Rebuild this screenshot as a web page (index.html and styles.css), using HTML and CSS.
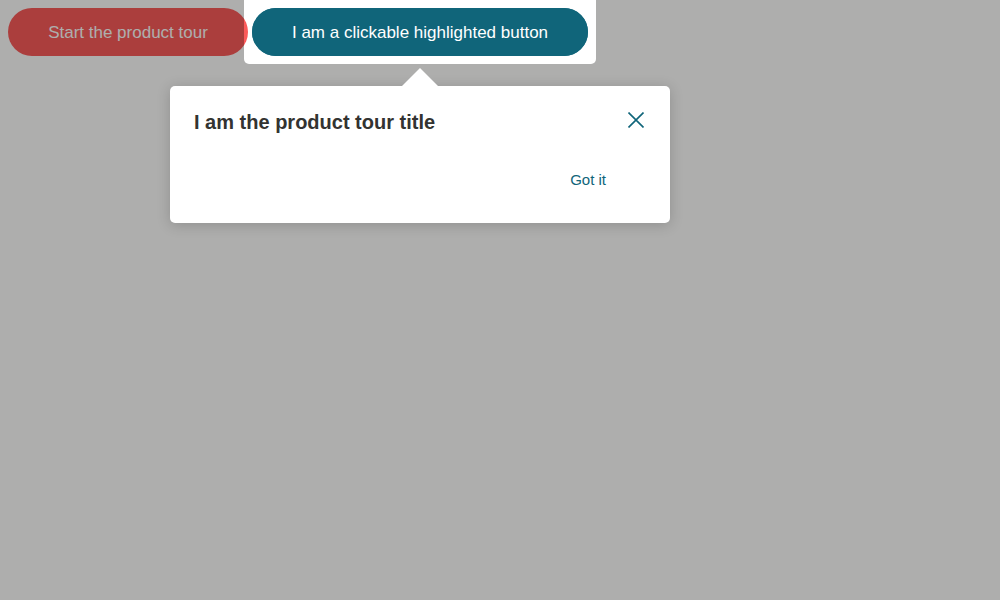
FILE: index.html
```html
<!DOCTYPE html>
<html>
<head>
<meta charset="utf-8">
<link rel="stylesheet" href="styles.css">
</head>
<body>
<div class="bar">
  <button class="btn btn-start">Start the product tour</button>
  <button class="btn btn-main">I am a clickable highlighted button</button>
</div>
<div class="spotlight"></div>
<div class="btn-lift">
  <button class="btn btn-main">I am a clickable highlighted button</button>
</div>
<div class="tour">
  <div class="tour-arrow"></div>
  <div class="tour-head">
    <h2 class="tour-title">I am the product tour title</h2>
    <button class="tour-close" aria-label="Close">
      <svg width="16" height="16" viewBox="0 0 16 16"><path d="M0.5 0.5L15.5 15.5M15.5 0.5L0.5 15.5" stroke="#10657a" stroke-width="1.6" fill="none"/></svg>
    </button>
  </div>
  <div class="tour-foot">
    <button class="tour-ok">Got it</button>
  </div>
</div>
</body>
</html>
```
FILE: styles.css
```css
html, body { margin: 0; padding: 0; }
body {
  background: #ffffff;
  font-family: "Liberation Sans", Arial, sans-serif;
  width: 1000px;
  height: 600px;
  overflow: hidden;
  position: relative;
}
.bar {
  display: flex;
  gap: 4px;
  padding: 8px;
}
.btn {
  height: 48px;
  border: none;
  border-radius: 24px;
  padding: 2px 0 0 0;
  font-family: "Liberation Sans", Arial, sans-serif;
  font-size: 17px;
  color: #ffffff;
  cursor: pointer;
}
.btn-start { background: #fb5a5a; width: 240px; }
.btn-main { background: #10657a; width: 336px; }
.spotlight {
  position: absolute;
  left: 244px;
  top: 0;
  width: 352px;
  height: 64px;
  border-radius: 0 0 5px 5px;
  box-shadow: 0 0 0 3000px rgba(2, 4, 0, 0.32);
}
.btn-lift {
  position: absolute;
  left: 252px;
  top: 8px;
  display: flex;
}
.tour {
  position: absolute;
  left: 170px;
  top: 86px;
  width: 500px;
  height: 137px;
  box-sizing: border-box;
  background: #ffffff;
  border-radius: 5px;
  box-shadow: 0 2px 14px rgba(0, 0, 0, 0.18);
  padding: 24px 26px 0 24px;
}
.tour-arrow {
  position: absolute;
  left: 232px;
  top: -18px;
  width: 0;
  height: 0;
  border-left: 18px solid transparent;
  border-right: 18px solid transparent;
  border-bottom: 18px solid #ffffff;
}
.tour-head {
  display: flex;
  justify-content: space-between;
  align-items: flex-start;
}
.tour-title {
  margin: 0;
  font-size: 20px;
  font-weight: bold;
  color: #333331;
  line-height: 24px;
}
.tour-close {
  border: none;
  background: none;
  padding: 0;
  width: 16px;
  height: 16px;
  margin-top: 2px;
  display: flex;
}
.tour-foot {
  display: flex;
  justify-content: flex-end;
  margin-top: 31px;
  padding-right: 38px;
}
.tour-ok {
  border: none;
  background: none;
  padding: 6px 0;
  font-family: "Liberation Sans", Arial, sans-serif;
  font-size: 15px;
  color: #10657a;
}
```
